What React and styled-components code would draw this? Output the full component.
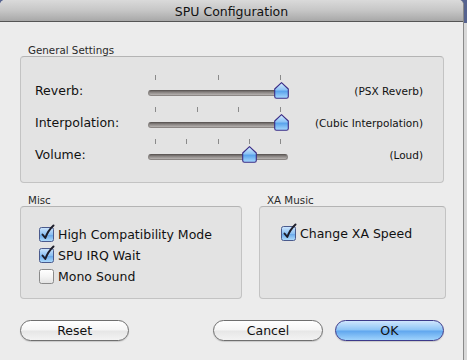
import React from "react";
import styled, { createGlobalStyle } from "styled-components";

const Global = createGlobalStyle`
  html, body { margin: 0; padding: 0; }
  body {
    width: 467px; height: 360px; overflow: hidden;
    background: linear-gradient(to bottom, #56638f 0, #56638f 23px, #d8d8d8 23px);
    font-family: "DejaVu Sans", "Liberation Sans", sans-serif;
    -webkit-font-smoothing: antialiased;
  }
`;

const Window = styled.div`
  width: 464px;
  height: 360px;
  background: #ececec;
  border-right: 1px solid #8a8a8a;
  box-sizing: border-box;
  border-radius: 5px 5px 0 0;
  overflow: hidden;
  display: flex;
  flex-direction: column;
`;

const TitleBar = styled.div`
  height: 22px;
  border-bottom: 1px solid #555;
  background: linear-gradient(to bottom, #dadada 0%, #c6c6c6 50%, #a8a8a8 100%);
  display: flex;
  align-items: center;
  justify-content: center;
  font-size: 12.5px;
  color: #111;
  padding-top: 1px;
  box-sizing: border-box;
`;

const Body = styled.div`
  padding: 20px 19px 0 20px;
  display: flex;
  flex-direction: column;
`;

const GroupLabel = styled.div`
  font-size: 10.3px;
  color: #2a2a2a;
  height: 14px;
  line-height: 17px;
  padding-left: 8px;
`;

const Box = styled.div`
  background: #e3e3e3;
  border: 1px solid #c3c3c3;
  border-top-color: #b4b4b4;
  border-radius: 4px;
  box-sizing: border-box;
  height: ${(p) => p.$h}px;
  padding: ${(p) => p.$pad};
`;

const SliderRow = styled.div`
  display: grid;
  grid-template-columns: 113px 140px 1fr;
  height: 32px;
  align-items: start;
`;

const RowLabel = styled.div`
  font-size: 12.5px;
  color: #111;
  line-height: 32px;
  height: 32px;
`;

const Value = styled.div`
  font-size: 10.5px;
  color: #111;
  text-align: right;
  line-height: 32px;
  height: 32px;
`;

const Slider = styled.div`
  position: relative;
  height: 32px;
`;

const Ticks = styled.div`
  display: flex;
  justify-content: space-between;
  padding: 0 7px;
  height: 4px;
`;

const Tick = styled.div`
  width: 1px;
  height: 5px;
  background: #8a8a8a;
`;

const Track = styled.div`
  margin-top: 11px;
  height: 4px;
  border-radius: 3px;
  background: linear-gradient(to bottom, #6d6866 0, #8f8a88 40%, #b7b3b1 100%);
  border: 1px solid #8c8785;
  border-top-color: #5e5957;
`;

const ThumbWrap = styled.div`
  position: absolute;
  top: 7px;
  width: 15px;
  height: 17px;
`;

const Thumb = ({ frac, id }) => (
  <ThumbWrap style={{ left: `${7 + frac * 126 - 7.5}px` }}>
    <svg width="15" height="17" viewBox="0 0 15 17">
      <defs>
        <linearGradient id={id} x1="0" y1="0" x2="0" y2="1">
          <stop offset="0" stopColor="#d7ecfe" />
          <stop offset="0.45" stopColor="#8ec4f6" />
          <stop offset="0.55" stopColor="#5aa3ec" />
          <stop offset="1" stopColor="#a9dafe" />
        </linearGradient>
      </defs>
      <path
        d="M7.5 0.7 L14.3 7 L14.3 14.5 Q14.3 16.3 12.5 16.3 L2.5 16.3 Q0.7 16.3 0.7 14.5 L0.7 7 Z"
        fill={`url(#${id})`}
        stroke="#3a2c86"
        strokeWidth="1.1"
        strokeLinejoin="round"
      />
    </svg>
  </ThumbWrap>
);

const SliderControl = ({ ticks, frac, id }) => (
  <Slider>
    <Ticks>
      {Array.from({ length: ticks }).map((_, i) => (
        <Tick key={i} />
      ))}
    </Ticks>
    <Track />
    <Thumb frac={frac} id={id} />
  </Slider>
);

const Columns = styled.div`
  display: grid;
  grid-template-columns: 222px 187px;
  column-gap: 17px;
  margin-top: 9px;
`;

const Group = styled.div`
  display: flex;
  flex-direction: column;
`;

const CheckRow = styled.label`
  display: flex;
  align-items: center;
  height: 21px;
  gap: 4px;
  font-size: 12.5px;
  color: #111;
`;

const CheckBoxWrap = styled.span`
  width: 15px;
  height: 15px;
  display: inline-block;
  position: relative;
`;

const CheckBox = ({ checked, id }) => (
  <CheckBoxWrap>
    <svg width="17" height="18" viewBox="0 0 17 18" style={{ position: "absolute", left: 0, top: -3 }}>
      <defs>
        <linearGradient id={id} x1="0" y1="0" x2="0" y2="1">
          {checked ? (
            <>
              <stop offset="0" stopColor="#cfe6fd" />
              <stop offset="0.5" stopColor="#8cc0f2" />
              <stop offset="0.55" stopColor="#6aa9ea" />
              <stop offset="1" stopColor="#b3defd" />
            </>
          ) : (
            <>
              <stop offset="0" stopColor="#ffffff" />
              <stop offset="0.5" stopColor="#f4f4f4" />
              <stop offset="1" stopColor="#e2e2e2" />
            </>
          )}
        </linearGradient>
      </defs>
      <rect x="0.5" y="3.5" width="14" height="14" rx="2" fill={`url(#${id})`} stroke={checked ? "#4a5a8c" : "#8a8a8a"} />
      {checked && (
        <path d="M3.5 10.5 L6.3 14 Q9 6.5 14.5 1.5" fill="none" stroke="#1d1d2a" strokeWidth="2" strokeLinecap="round" strokeLinejoin="round" />
      )}
    </svg>
  </CheckBoxWrap>
);

const ButtonBar = styled.div`
  display: flex;
  margin-top: 21px;
`;

const Button = styled.button`
  width: 110px;
  height: 21px;
  border-radius: 11px;
  border: 1px solid ${(p) => (p.$primary ? "#3c3a8a" : "#6f6f6f")};
  background: ${(p) =>
    p.$primary
      ? "linear-gradient(to bottom, #cfe6fd 0%, #8cc4f6 48%, #5fa6ee 52%, #9fd3fc 100%)"
      : "linear-gradient(to bottom, #ffffff 0%, #f5f5f5 48%, #e6e6e6 52%, #f3f3f3 100%)"};
  font-family: "DejaVu Sans", "Liberation Sans", sans-serif;
  font-size: 12.5px;
  color: #111;
  padding: 0;
  margin-left: ${(p) => p.$ml || 0}px;
  box-shadow: 0 1px 1px rgba(0, 0, 0, 0.15);
`;

export default function App() {
  return (
    <>
      <Global />
      <Window>
        <TitleBar>SPU Configuration</TitleBar>
        <Body>
          <GroupLabel>General Settings</GroupLabel>
          <Box $h={127} $pad="18px 20px 0 14px">
            <SliderRow>
              <RowLabel>Reverb:</RowLabel>
              <SliderControl ticks={3} frac={1} id="g1" />
              <Value>(PSX Reverb)</Value>
            </SliderRow>
            <SliderRow>
              <RowLabel>Interpolation:</RowLabel>
              <SliderControl ticks={4} frac={1} id="g2" />
              <Value>(Cubic Interpolation)</Value>
            </SliderRow>
            <SliderRow>
              <RowLabel>Volume:</RowLabel>
              <SliderControl ticks={5} frac={0.75} id="g3" />
              <Value>(Loud)</Value>
            </SliderRow>
          </Box>
          <Columns>
            <Group>
              <GroupLabel>Misc</GroupLabel>
              <Box $h={93} $pad="17px 0 0 18px">
                <CheckRow>
                  <CheckBox checked id="c1" />
                  High Compatibility Mode
                </CheckRow>
                <CheckRow>
                  <CheckBox checked id="c2" />
                  SPU IRQ Wait
                </CheckRow>
                <CheckRow>
                  <CheckBox id="c3" />
                  Mono Sound
                </CheckRow>
              </Box>
            </Group>
            <Group>
              <GroupLabel>XA Music</GroupLabel>
              <Box $h={93} $pad="16px 0 0 21px">
                <CheckRow>
                  <CheckBox checked id="c4" />
                  Change XA Speed
                </CheckRow>
              </Box>
            </Group>
          </Columns>
          <ButtonBar>
            <Button>Reset</Button>
            <Button $ml={84}>Cancel</Button>
            <Button $primary $ml={12}>OK</Button>
          </ButtonBar>
        </Body>
      </Window>
    </>
  );
}
